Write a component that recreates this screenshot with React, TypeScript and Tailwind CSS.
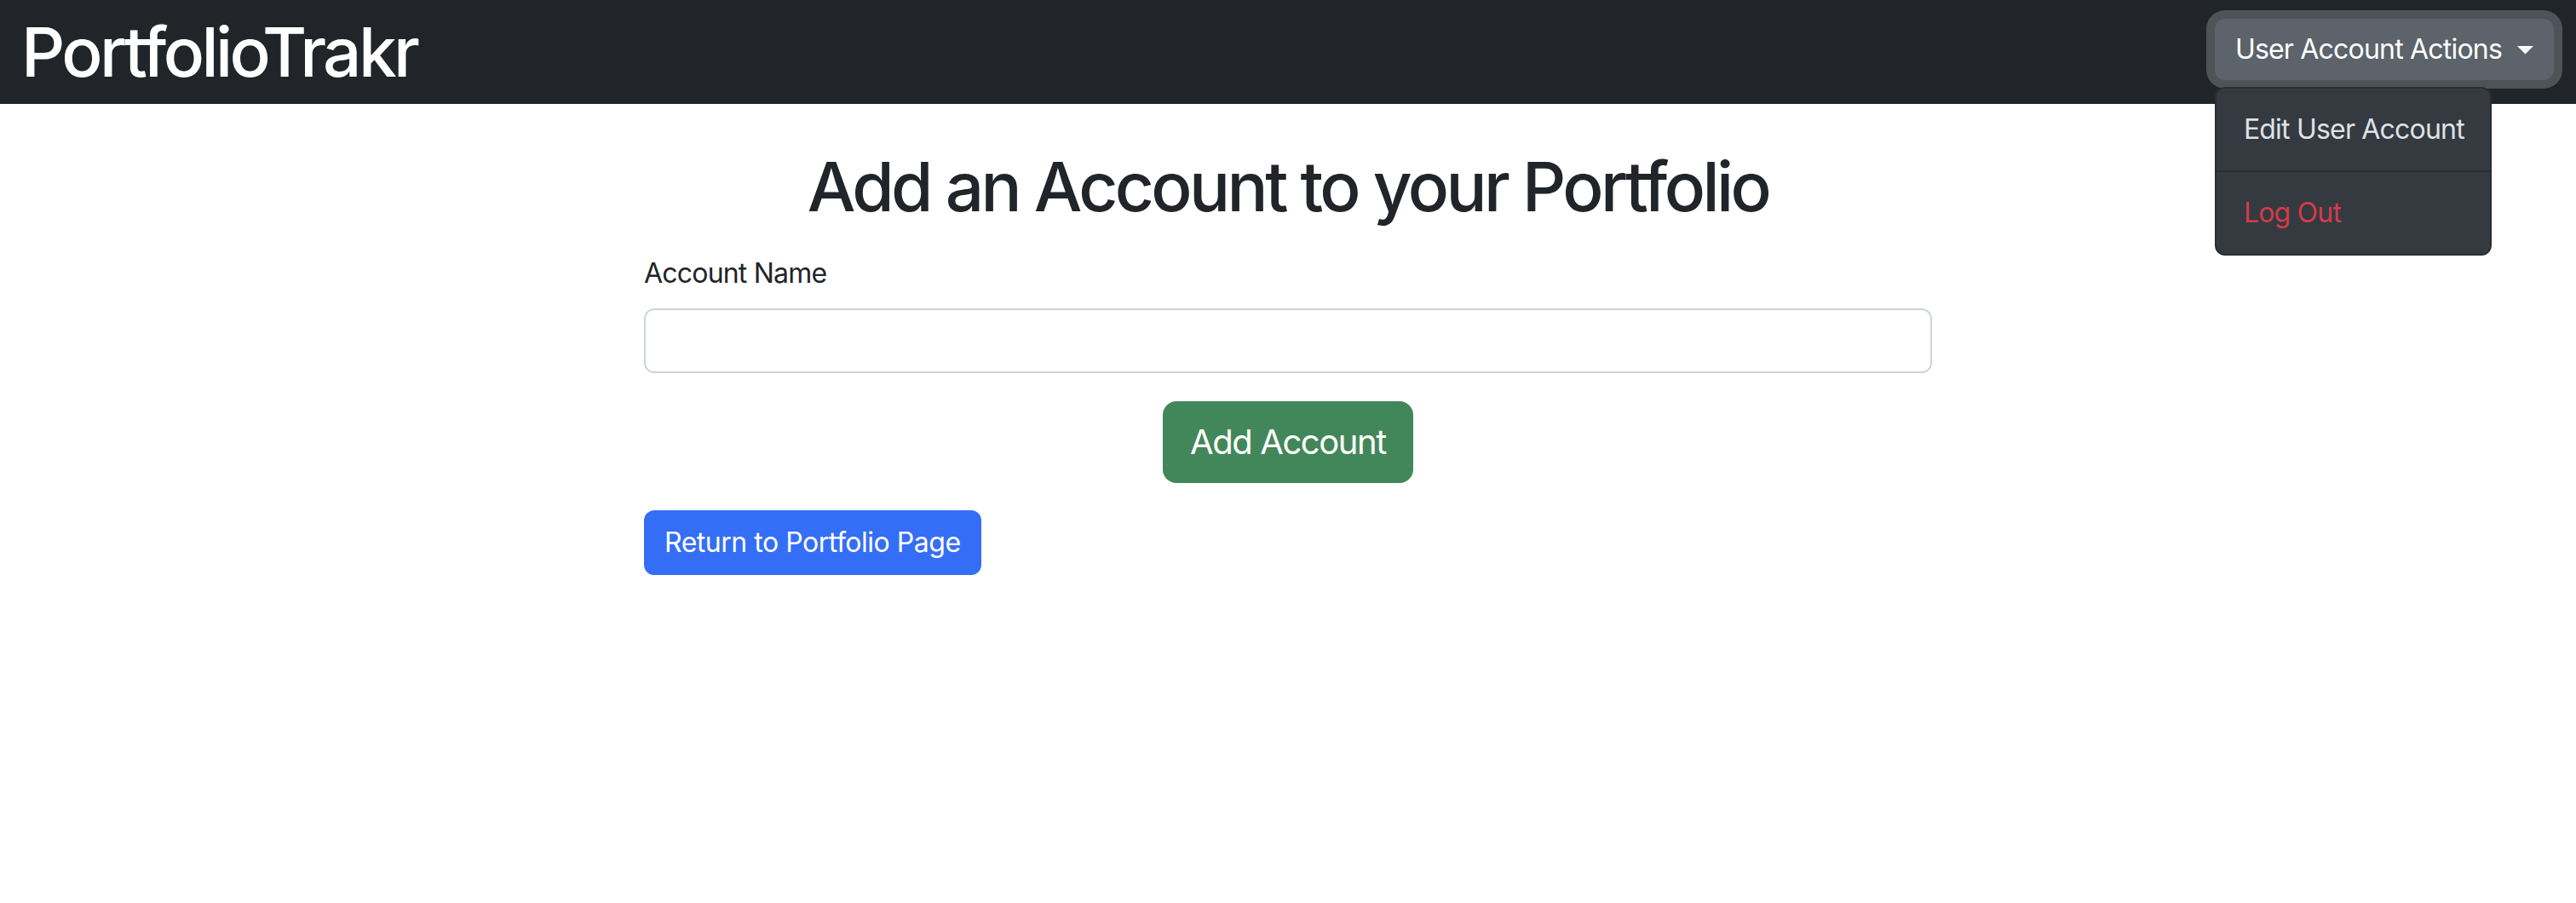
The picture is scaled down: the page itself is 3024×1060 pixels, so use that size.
import { useState } from "react";

const font = "font-['Inter','Liberation_Sans',sans-serif]";

function AccountMenu() {
	const [open, setOpen] = useState(true);

	return (
		<div className="relative mt-[22px] self-start">
			<button
				type="button"
				onClick={() => setOpen(!open)}
				className="flex h-[72px] items-center gap-[18px] whitespace-nowrap rounded-[12px] bg-[#5c636a] px-[24px] text-[32px] leading-[48px] tracking-[-0.025em] text-white shadow-[0_0_0_10px_#4e5358]"
			>
				User Account Actions
				<svg width="19" height="10" viewBox="0 0 19 10" className="mt-[2px]">
					<path d="M0 0 L19 0 L9.5 9.5 Z" fill="#fff" />
				</svg>
			</button>
			{open ? (
				<div className="absolute left-0 top-full mt-[8px] w-[325px] rounded-[12px] border-2 border-black/20 bg-[#343a40] py-[16px]">
					<a href="#" className="block whitespace-nowrap px-[32px] py-[8px] text-[32px] leading-[48px] tracking-[-0.025em] text-[#dee2e6]">Edit User Account</a>
					<hr className="my-[16px] border-t-2 border-[#2b3035]" />
					<a href="#" className="block px-[32px] py-[8px] text-[32px] leading-[48px] tracking-[-0.025em] text-[#d63a49]">Log Out</a>
				</div>
			) : null}
		</div>
	);
}

export default function App() {
	const [name, setName] = useState("");

	return (
		<div className={`min-h-[1060px] bg-white ${font}`}>
			<nav className="flex h-[122px] items-center justify-between bg-[#212529] pl-[25px] pr-[26px]">
				<h1 className="text-[80px] font-medium leading-[96px] tracking-[-0.045em] text-white">PortfolioTrakr</h1>
				<AccountMenu />
			</nav>

			<main className="mx-auto flex w-[1512px] flex-col pt-[49px] text-[#212529]">
				<h1 className="text-center text-[80px] font-medium leading-[96px] tracking-[-0.045em]">Add an Account to your Portfolio</h1>

				<label htmlFor="account-name" className="mt-[30px] text-[32px] leading-[48px] tracking-[-0.025em]">Account Name</label>
				<input
					id="account-name"
					value={name}
					onChange={(e) => setName(e.target.value)}
					className="mt-[17px] h-[76px] rounded-[12px] border-2 border-[#ced4da] px-[24px] text-[32px] outline-none"
				/>

				<button type="button" className="mx-auto mt-[33px] h-[96px] rounded-[16px] bg-[#42875a] px-[32px] text-[40px] tracking-[-0.035em] text-white">
					Add Account
				</button>

				<div className="mt-[32px]">
					<button type="button" className="h-[76px] rounded-[12px] bg-[#356ef6] px-[24px] text-[32px] tracking-[-0.015em] text-white">
						Return to Portfolio Page
					</button>
				</div>
			</main>
		</div>
	);
}
